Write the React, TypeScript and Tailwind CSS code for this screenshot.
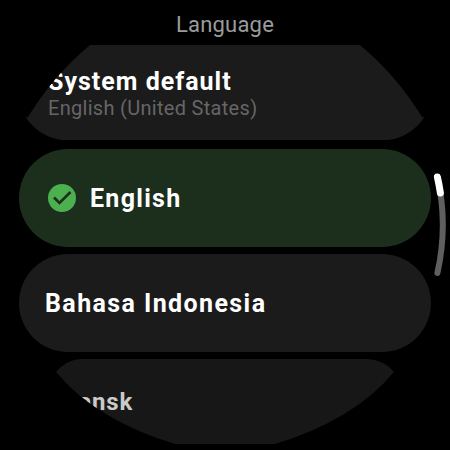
export default function App() {
  return (
    <div className="relative w-[450px] h-[450px] overflow-hidden bg-black font-['Roboto',sans-serif]">
      <div className="h-[45px] flex items-center justify-center pt-[4px] text-[22px] tracking-[0.2px] text-[#9c9c9c]">Language</div>

      <div className="flex flex-col px-[19px]">
        {/* top item, squeezed by the round screen */}
        <div className="h-[95px] rounded-[48px] bg-[#1b1b1b] pl-[29px] pt-[21px] [clip-path:path('M71_0_L341_0_Q378_31_403_72_L412_72_L412_95_L0_95_L0_72_L9_72_Q34_31_71_0_Z')]">
          <div className="text-[25px] leading-[31px] font-bold tracking-[1px] text-white">System default</div>
          <div className="text-[20px] leading-[22px] tracking-[0.3px] text-[#666666]">English (United States)</div>
        </div>

        <div className="mt-[9px] h-[98px] rounded-[49px] bg-[#1c2e1c] flex items-center pl-[28px] gap-[13px]">
          <svg width="30" height="30" viewBox="0 0 30 30">
            <circle cx="15" cy="15" r="14" fill="#4caf50" />
            <path d="M7 14.5 L12.5 20 L23.5 9" fill="none" stroke="#1c2e1c" strokeWidth="2.6" />
          </svg>
          <span className="pt-[1px] text-[25px] font-bold tracking-[1.3px] text-white">English</span>
        </div>

        <div className="mt-[7px] h-[98px] rounded-[49px] bg-[#1b1b1b] flex items-center pl-[26px]">
          <span className="pt-[1px] text-[25px] font-bold tracking-[1.4px] text-white">Bahasa Indonesia</span>
        </div>

        <div className="mt-[7px] h-[85px] bg-[#171717] pl-[43px] pt-[29px] [clip-path:path('M61_0_L349_0_Q365_1_375_13_Q335_61_256_85_L156_85_Q77_61_37_13_Q47_1_61_0_Z')]">
          <span className="text-[24px] leading-[28px] font-bold tracking-[0.8px] text-[#cacaca] block">Dansk</span>
        </div>
      </div>

      {/* scrollbar */}
      <svg className="absolute inset-0" width="450" height="450" viewBox="0 0 450 450">
        <path d="M437.4 177 A217.5 217.5 0 0 1 437.4 273" fill="none" stroke="#5f5f5f" strokeWidth="6" strokeLinecap="round" />
        <path d="M437.4 177 A217.5 217.5 0 0 1 440.4 193" fill="none" stroke="#ffffff" strokeWidth="7" strokeLinecap="round" />
      </svg>
    </div>
  )
}
